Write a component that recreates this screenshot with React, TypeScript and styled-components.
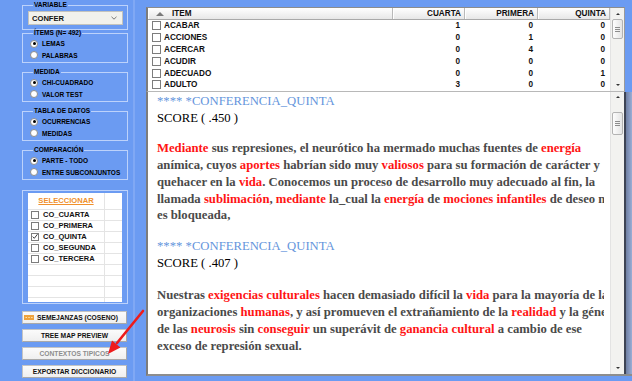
import React from "react";
import styled, { createGlobalStyle } from "styled-components";

const GlobalStyle = createGlobalStyle`
  html, body {
    margin: 0;
    padding: 0;
    background: #6b9bf2;
  }
  * {
    box-sizing: border-box;
  }
`;

const Screen = styled.div`
  position: relative;
  display: flex;
  width: 632px;
  height: 381px;
  overflow: hidden;
  background: #6b9bf2;
  font-family: "Liberation Sans", Arial, sans-serif;
`;

/* ---------- left side panel ---------- */

const Sidebar = styled.div`
  width: 135px;
  flex: none;
  padding: 1px 0 0 22px;
  display: flex;
  flex-direction: column;
  border-right: 2px solid #80a8f4;
`;

const Group = styled.fieldset<{ $gap: number; $bottom?: number }>`
  width: 106px;
  margin: ${(p) => p.$gap}px 0 0 0;
  padding: 1px 0 ${(p) => p.$bottom ?? 1}px 7px;
  border: 1px solid rgba(222, 234, 255, 0.7);
  min-width: 0;
`;

const Legend = styled.legend`
  margin-left: 3px;
  padding: 0 1px;
  font-size: 6.5px;
  line-height: 8px;
  font-weight: bold;
  color: #000;
`;

const SelectBox = styled.div`
  width: 95px;
  height: 14px;
  margin: 1px 0 0 -2px;
  padding: 0 5px 0 3px;
  display: flex;
  align-items: center;
  justify-content: space-between;
  background: #f1f1ec;
  border: 1px solid #c3c3bd;
  font-size: 7.6px;
  font-weight: bold;
  color: #111;
`;

const RadioRow = styled.div`
  height: 11.5px;
  display: flex;
  align-items: center;
  gap: 4px;
  font-size: 6.5px;
  font-weight: bold;
  color: #000;
`;

const RadioDot = styled.span<{ $on: boolean }>`
  width: 8px;
  height: 8px;
  flex: none;
  border-radius: 50%;
  border: 1px solid #8d8d8d;
  background: #fff;
  display: flex;
  align-items: center;
  justify-content: center;
  &::after {
    content: "";
    width: 3px;
    height: 3px;
    border-radius: 50%;
    background: ${(p) => (p.$on ? "#000" : "transparent")};
  }
`;

const ListFrame = styled.div`
  width: 106px;
  margin-top: 10px;
  padding: 2px 5px 1px 5px;
  border: 1px solid rgba(222, 234, 255, 0.7);
`;

const ListBox = styled.div`
  height: 109px;
  overflow: hidden;
  background: #fff;
  display: flex;
  flex-direction: column;
`;

const ListHeader = styled.div`
  height: 16.5px;
  flex: none;
  display: grid;
  grid-template-columns: 77px 1fr;
  border-bottom: 1px solid #e4e4e4;
  & > span:first-child {
    border-right: 1px solid #e4e4e4;
    display: flex;
    align-items: center;
    justify-content: center;
    font-size: 7.6px;
    font-weight: bold;
    color: #f0902c;
    text-decoration: underline;
  }
`;

const ListRow = styled.div`
  height: 11px;
  flex: none;
  display: grid;
  grid-template-columns: 77px 1fr;
  border-bottom: 1px solid #e4e4e4;
  & > span:first-child {
    border-right: 1px solid #e4e4e4;
    display: flex;
    align-items: center;
    gap: 4px;
    padding-left: 3px;
    font-size: 7.5px;
    font-weight: bold;
    color: #111;
  }
`;

const CheckBox = styled.span<{ $size: number }>`
  width: ${(p) => p.$size}px;
  height: ${(p) => p.$size}px;
  flex: none;
  border: 1px solid #7d7d7d;
  background: #fff;
  display: flex;
  align-items: center;
  justify-content: center;
`;

const ActionButton = styled.div<{ $gap: number; $muted?: boolean; $left?: boolean }>`
  width: 105px;
  height: 13px;
  margin-top: ${(p) => p.$gap}px;
  padding: ${(p) => (p.$left ? "0 0 0 1px" : "0")};
  display: flex;
  align-items: center;
  justify-content: ${(p) => (p.$left ? "flex-start" : "center")};
  gap: 3px;
  background: linear-gradient(#fbfbfb, #efefef);
  border: 1px solid #c4c4c4;
  border-right-color: #a9a9a9;
  border-bottom-color: #a9a9a9;
  font-size: 6.7px;
  font-weight: bold;
  color: ${(p) => (p.$muted ? "#8d8d8d" : "#111")};
  white-space: nowrap;
`;

/* ---------- right main area ---------- */

const Main = styled.div`
  margin-left: 11px;
  padding-top: 7px;
  flex: 1;
  display: flex;
  flex-direction: column;
`;

const TableFrame = styled.div`
  width: 479px;
  display: flex;
  background: #fff;
  border-top: 1px solid #8c8c8c;
  border-bottom: 1px solid #b8b8b8;
  border-left: 2px solid #7c7c7c;
  border-right: 1px solid #9a9a9a;
`;

const TableGrid = styled.div`
  width: 462px;
  display: flex;
  flex-direction: column;
`;

const cols = "245px 72px 73px 72px";

const HeadRow = styled.div`
  height: 12px;
  display: grid;
  grid-template-columns: ${cols};
  background: linear-gradient(#ffffff, #e7e7e7);
  border-bottom: 1px solid #a9a9a9;
`;

const HeadCell = styled.div<{ $first?: boolean }>`
  display: flex;
  align-items: center;
  justify-content: ${(p) => (p.$first ? "flex-start" : "flex-end")};
  padding: ${(p) => (p.$first ? "0 0 0 8px" : "0 3px 0 0")};
  gap: 8px;
  border-right: 1px solid #b9b9b9;
  box-shadow: inset 1px 0 0 #fff;
  font-size: 8.2px;
  font-weight: bold;
  color: #111;
`;

const SortMark = styled.span`
  width: 0;
  height: 0;
  border-left: 4.5px solid transparent;
  border-right: 4.5px solid transparent;
  border-bottom: 4px solid #7a7a7a;
`;

const BodyRow = styled.div`
  height: 11.8px;
  display: grid;
  grid-template-columns: ${cols};
  font-size: 8.2px;
  font-weight: bold;
  color: #111;
`;

const ItemCell = styled.div`
  display: flex;
  align-items: center;
  gap: 3px;
  padding-left: 4px;
`;

const NumCell = styled.div`
  display: flex;
  align-items: center;
  justify-content: flex-end;
  padding-right: 5px;
`;

const ScrollTrack = styled.div`
  width: 14px;
  flex: none;
  display: flex;
  flex-direction: column;
  background: #f2f2f0;
  border-left: 1px solid #e3e3e3;
`;

const ScrollArrow = styled.div`
  height: 11px;
  flex: none;
  display: flex;
  align-items: center;
  justify-content: center;
`;

const ArrowGlyph = styled.span<{ $down?: boolean }>`
  width: 0;
  height: 0;
  border-left: 2.5px solid transparent;
  border-right: 2.5px solid transparent;
  ${(p) =>
    p.$down ? "border-top: 2.5px solid #333;" : "border-bottom: 2.5px solid #333;"}
`;

const ScrollThumb = styled.div<{ $offset: number; $size: number }>`
  height: ${(p) => p.$size}px;
  margin: ${(p) => p.$offset}px 1px 0 1px;
  flex: none;
  display: flex;
  flex-direction: column;
  align-items: center;
  justify-content: center;
  gap: 1px;
  border: 1px solid #b3b3b3;
  border-radius: 2px;
  background: linear-gradient(90deg, #fdfdfd, #e4e4e4);
`;

const Grip = styled.span`
  width: 5px;
  height: 1px;
  background: #8c8c8c;
`;

const Spacer = styled.div`
  flex: 1;
`;

const TextFrame = styled.div`
  height: 284px;
  display: flex;
  background: #fff;
  border-left: 2px solid #7c7c7c;
  border-bottom: 2px solid #8d8d8d;
`;

const TextArea = styled.div`
  width: 456px;
  flex: none;
  padding: 1.5px 0 0 9px;
  overflow: hidden;
  white-space: nowrap;
  font-family: "Liberation Serif", "Times New Roman", serif;
  font-size: 12.7px;
`;

const FrameEdge = styled.div`
  width: 8px;
  flex: none;
  background: linear-gradient(90deg, #3e4455 0 2px, #6f7fa3 2px, #9aaed6);
`;

const Heading = styled.div<{ $gap?: number }>`
  margin-top: ${(p) => p.$gap ?? 0}px;
  line-height: 17px;
  color: #6595dc;
`;

const Score = styled.div`
  line-height: 17px;
  color: #000;
`;

const Para = styled.div<{ $gap: number }>`
  margin-top: ${(p) => p.$gap}px;
  font-weight: bold;
  color: #4a4a4a;
  line-height: 16.8px;
`;

const Hot = styled.span`
  color: #ff1414;
`;

const PointerArrow = styled.svg`
  position: absolute;
  left: 100px;
  top: 305px;
  pointer-events: none;
`;

/* ---------- data ---------- */

const radioGroups = [
  { title: "ÍTEMS (N= 492)", options: ["LEMAS", "PALABRAS"], gap: -1 },
  { title: "MEDIDA", options: ["CHI-CUADRADO", "VALOR TEST"], gap: 5 },
  { title: "TABLA DE DATOS", options: ["OCURRENCIAS", "MEDIDAS"], gap: 5 },
  { title: "COMPARACIÓN", options: ["PARTE - TODO", "ENTRE SUBCONJUNTOS"], gap: 5 },
];

const subsets = [
  { name: "CO_CUARTA", on: false },
  { name: "CO_PRIMERA", on: false },
  { name: "CO_QUINTA", on: true },
  { name: "CO_SEGUNDA", on: false },
  { name: "CO_TERCERA", on: false },
  { name: "", on: false },
  { name: "", on: false },
  { name: "", on: false },
  { name: "", on: false },
];

const rows = [
  { item: "ACABAR", v: [1, 0, 0] },
  { item: "ACCIONES", v: [0, 1, 0] },
  { item: "ACERCAR", v: [0, 4, 0] },
  { item: "ACUDIR", v: [0, 0, 0] },
  { item: "ADECUADO", v: [0, 0, 1] },
  { item: "ADULTO", v: [3, 0, 0] },
];

type Seg = string | { r: string };

const firstText: Seg[][] = [
  [{ r: "Mediante" }, " sus represiones, el neurótico ha mermado muchas fuentes de ", { r: "energía" }],
  ["anímica, cuyos ", { r: "aportes" }, " habrían sido muy ", { r: "valiosos" }, " para su formación de carácter y"],
  ["quehacer en la ", { r: "vida" }, ". Conocemos un proceso de desarrollo muy adecuado al fin, la"],
  ["llamada ", { r: "sublimación" }, ", ", { r: "mediante" }, " la_cual la ", { r: "energía" }, " de ", { r: "mociones infantiles" }, " de deseo no"],
  ["es bloqueada,"],
];

const secondText: Seg[][] = [
  ["Nuestras ", { r: "exigencias culturales" }, " hacen demasiado difícil la ", { r: "vida" }, " para la mayoría de las"],
  ["organizaciones ", { r: "humanas" }, ", y así promueven el extrañamiento de la ", { r: "realidad" }, " y la génesis"],
  ["de las ", { r: "neurosis" }, " sin ", { r: "conseguir" }, " un superávit de ", { r: "ganancia cultural" }, " a cambio de ese"],
  ["exceso de represión sexual."],
];

function Lines({ lines }: { lines: Seg[][] }) {
  return (
    <>
      {lines.map((line, i) => (
        <div key={i}>
          {line.map((s, j) => (typeof s === "string" ? <span key={j}>{s}</span> : <Hot key={j}>{s.r}</Hot>))}
        </div>
      ))}
    </>
  );
}

function Scrollbar({ offset, size }: { offset: number; size: number }) {
  return (
    <ScrollTrack>
      <ScrollArrow>
        <ArrowGlyph />
      </ScrollArrow>
      <ScrollThumb $offset={offset} $size={size}>
        <Grip />
        <Grip />
        <Grip />
      </ScrollThumb>
      <Spacer />
      <ScrollArrow>
        <ArrowGlyph $down />
      </ScrollArrow>
    </ScrollTrack>
  );
}

function Tick() {
  return (
    <svg width="7" height="7" viewBox="0 0 7 7">
      <path d="M0.8 3.6 L2.7 5.6 L6.4 0.8" fill="none" stroke="#333" strokeWidth="1.1" />
    </svg>
  );
}

export default function App() {
  return (
    <Screen>
      <GlobalStyle />
      <Sidebar>
        <Group $gap={0} $bottom={4}>
          <Legend>VARIABLE</Legend>
          <SelectBox>
            <span>CONFER</span>
            <svg width="6" height="4" viewBox="0 0 6 4">
              <path d="M0.5 0.8 L3 3.2 L5.5 0.8" fill="none" stroke="#777" strokeWidth="1" />
            </svg>
          </SelectBox>
        </Group>

        {radioGroups.map((g) => (
          <Group key={g.title} $gap={g.gap}>
            <Legend>{g.title}</Legend>
            {g.options.map((o, i) => (
              <RadioRow key={o}>
                <RadioDot $on={i === 0} />
                {o}
              </RadioRow>
            ))}
          </Group>
        ))}

        <ListFrame>
          <ListBox>
            <ListHeader>
              <span>SELECCIONAR</span>
              <span />
            </ListHeader>
            {subsets.map((s, i) => (
              <ListRow key={i}>
                <span>
                  {s.name && <CheckBox $size={8}>{s.on && <Tick />}</CheckBox>}
                  {s.name}
                </span>
                <span />
              </ListRow>
            ))}
          </ListBox>
        </ListFrame>

        <ActionButton $gap={7} $left>
          <svg width="10" height="5" viewBox="0 0 10 5">
            <rect x="0" y="0" width="10" height="5" fill="#efa23c" />
            <path d="M1.5 2.5 H3 M4.3 2.5 H5.8 M7.1 2.5 H8.6" stroke="#fde3a8" strokeWidth="1" />
          </svg>
          SEMEJANZAS (COSENO)
        </ActionButton>
        <ActionButton $gap={5}>TREE MAP PREVIEW</ActionButton>
        <ActionButton $gap={5} $muted>
          CONTEXTOS TIPICOS
        </ActionButton>
        <ActionButton $gap={5}>EXPORTAR DICCIONARIO</ActionButton>
      </Sidebar>

      <Main>
        <TableFrame>
          <TableGrid>
            <HeadRow>
              <HeadCell $first>
                <SortMark />
                ITEM
              </HeadCell>
              <HeadCell>CUARTA</HeadCell>
              <HeadCell>PRIMERA</HeadCell>
              <HeadCell>QUINTA</HeadCell>
            </HeadRow>
            {rows.map((r) => (
              <BodyRow key={r.item}>
                <ItemCell>
                  <CheckBox $size={9} />
                  {r.item}
                </ItemCell>
                {r.v.map((n, i) => (
                  <NumCell key={i}>{n}</NumCell>
                ))}
              </BodyRow>
            ))}
          </TableGrid>
          <Scrollbar offset={0} size={20} />
        </TableFrame>

        <TextFrame>
          <TextArea>
            <Heading>**** *CONFERENCIA_QUINTA</Heading>
            <Score>SCORE ( .450 )</Score>
            <Para $gap={13}>
              <Lines lines={firstText} />
            </Para>
            <Heading $gap={14}>**** *CONFERENCIA_QUINTA</Heading>
            <Score>SCORE ( .407 )</Score>
            <Para $gap={15}>
              <Lines lines={secondText} />
            </Para>
          </TextArea>
          <Spacer />
          <Scrollbar offset={9} size={23} />
          <FrameEdge />
        </TextFrame>
      </Main>

      <PointerArrow width="50" height="55" viewBox="0 0 50 55">
        <line x1="43" y1="6" x2="17" y2="38" stroke="#ee1c1c" strokeWidth="2.6" strokeLinecap="round" />
        <polygon points="8,49 20.4,42.4 12,35.4" fill="#ee1c1c" />
      </PointerArrow>
    </Screen>
  );
}
